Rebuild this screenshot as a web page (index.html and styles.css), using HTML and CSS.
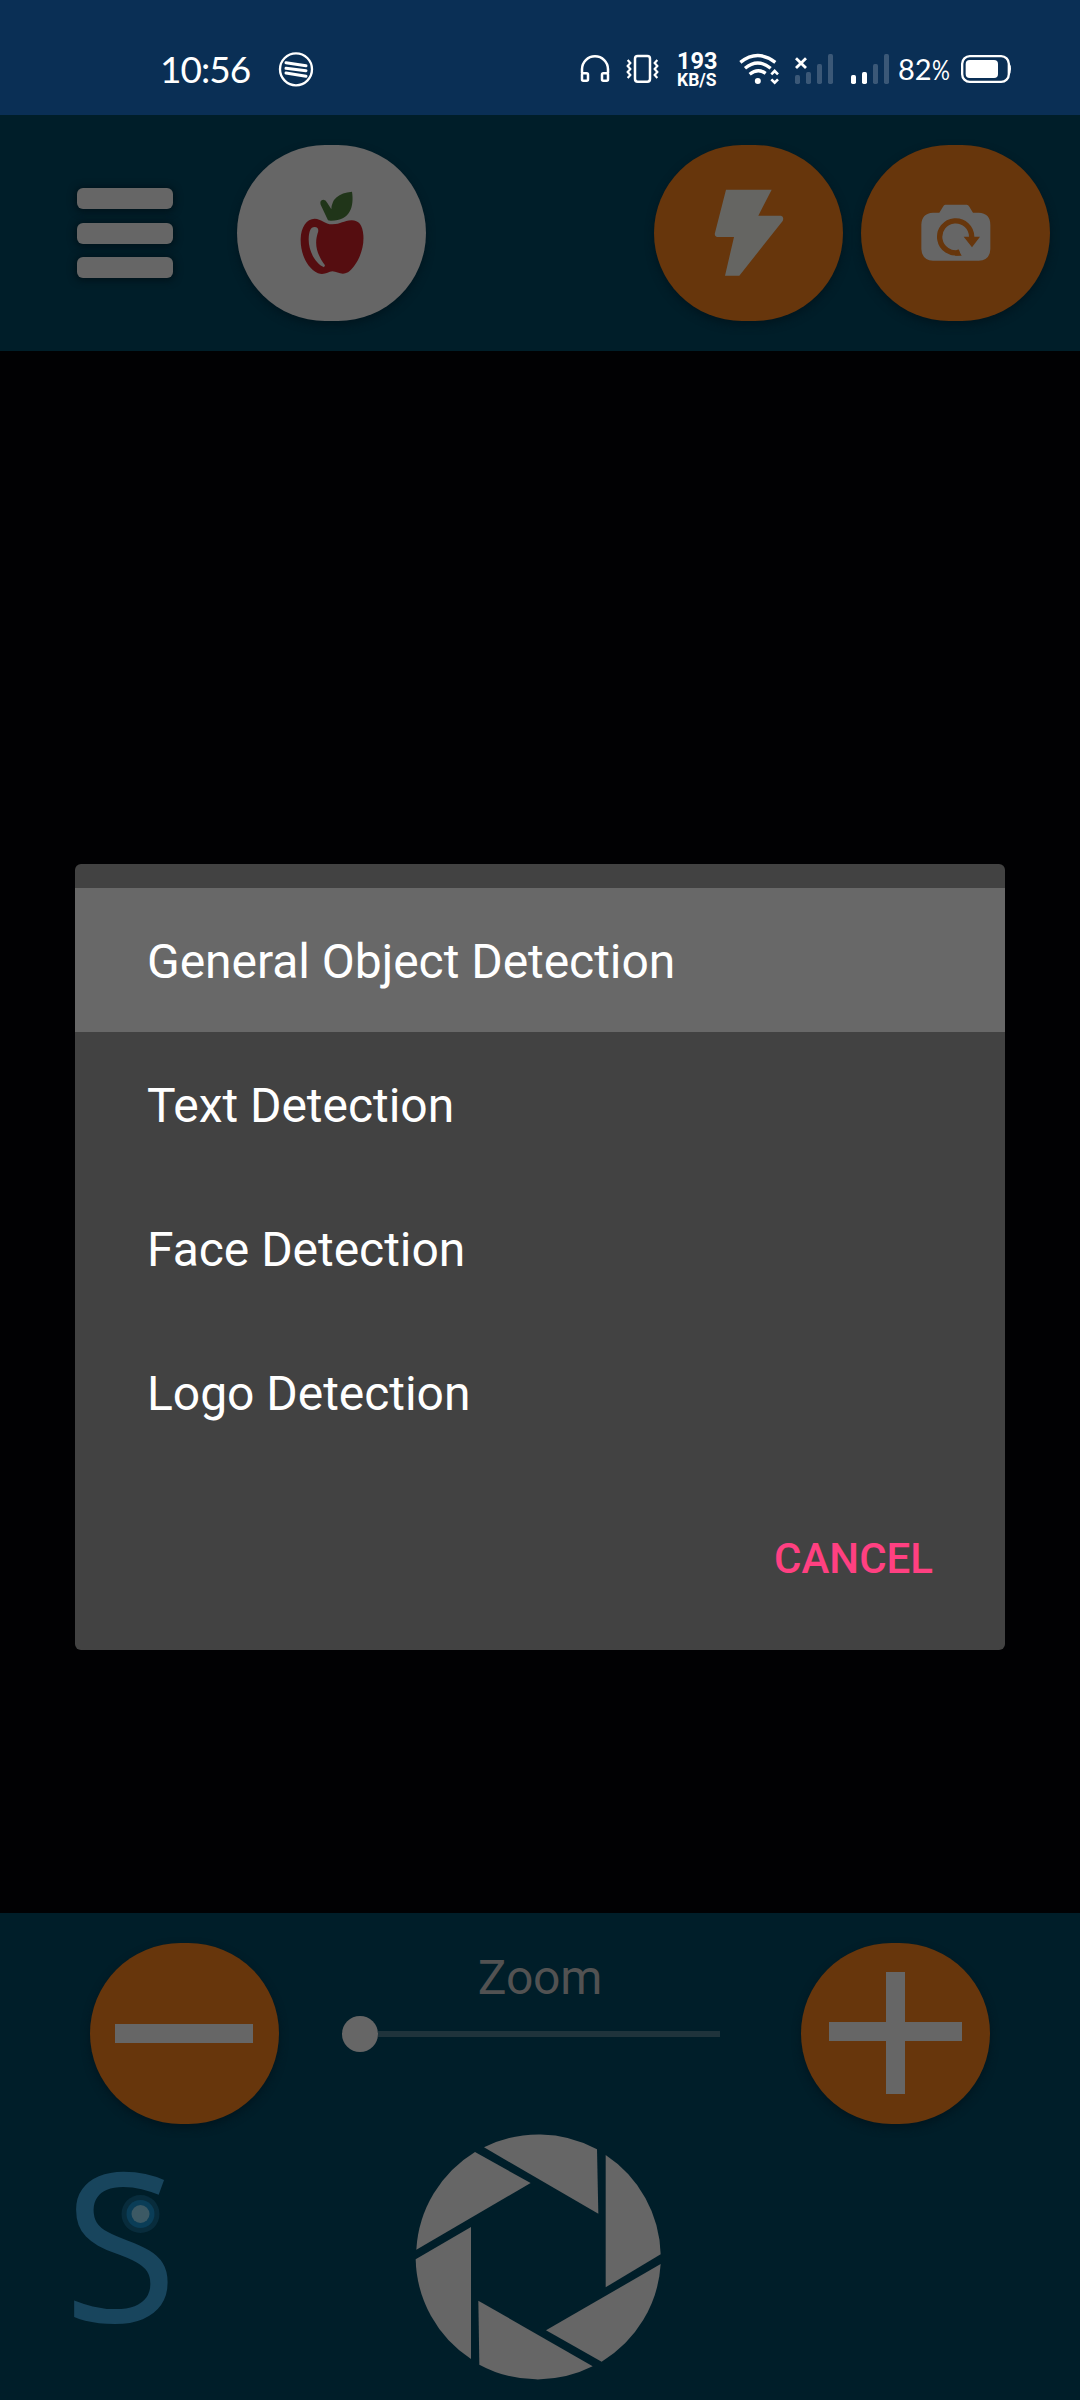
FILE: index.html
```html
<!DOCTYPE html>
<html lang="en">
<head>
<meta charset="utf-8">
<title>Camera</title>
<link rel="stylesheet" href="styles.css">
</head>
<body>
<div class="status">
  <span class="clock">10:56</span>
  <svg class="music" width="36" height="80" viewBox="414 0 108 240" fill="none" stroke="#fff"><circle cx="468" cy="118" r="48" stroke-width="7"/><path d="M438 98L498 107M438 115L498 122M438 129L498 139" stroke-width="9" stroke-linecap="round"/></svg>
  <svg class="phones" width="30" height="80" viewBox="60 0 90 240" fill="none" stroke="#fff" stroke-width="7.5"><path d="M66 130V118A39 39 0 0 1 144 118V130"/><rect x="66" y="130" width="18" height="22" rx="4"/><rect x="126" y="130" width="18" height="22" rx="4"/></svg>
  <svg class="vibrate" width="34" height="80" viewBox="198 0 102 240" fill="none" stroke="#fff" stroke-width="7.5"><rect x="225" y="78" width="45" height="77" rx="8"/><path d="M203 90L211 99L203 108L211 117L203 126L211 135L203 144M292 90L284 99L292 108L284 117L292 126L284 135L292 144" stroke-width="6.5"/></svg>
  <div class="speed"><span class="speed-value">193</span><span class="speed-unit">KB/S</span></div>
  <svg class="wifi" width="41" height="80" viewBox="537 0 123 240" fill="none" stroke="#fff" stroke-width="10"><path d="M541 97Q593 56 646 97M555 115Q593 83 632 115M569 133Q593 113 617 130"/><circle cx="593.500" cy="153" r="9" fill="#fff" stroke="none"/><path d="M634 133L644 123L654 133M634 148L644 158L654 148" stroke-width="8"/></svg>
  <svg class="sim-a" width="40" height="80" viewBox="42 0 120 240" fill="#3b5877"><rect x="45" y="135" width="15" height="27" rx="5"/><rect x="78" y="126" width="15" height="36" rx="5"/><rect x="111" y="102" width="15" height="60" rx="5"/><rect x="144" y="72" width="15" height="90" rx="5"/><path d="M48 85L78 114M78 85L48 114" stroke="#fff" stroke-width="8.500"/></svg>
  <svg class="sim-b" width="40" height="80" viewBox="210 0 120 240" fill="#3b5877"><rect x="213" y="135" width="15" height="27" rx="5" fill="#fff"/><rect x="246" y="126" width="15" height="36" rx="5" fill="#fff"/><rect x="279" y="102" width="15" height="60" rx="5"/><rect x="312" y="72" width="15" height="90" rx="5"/></svg>
  <span class="percent">82<small>%</small></span>
  <svg class="battery" width="52" height="80" viewBox="540 0 156 240"><rect x="546.500" y="78.500" width="140" height="77" rx="23" fill="none" stroke="#fff" stroke-width="7"/><rect x="557" y="90" width="97" height="54" rx="12" fill="#fff"/><path d="M688 99Q693 105 693 117Q693 129 688 135Z" fill="#fff"/></svg>
</div>

<header class="toolbar">
  <div class="menu"><i></i><i></i><i></i></div>
  <div class="round round-light">
    <svg width="64" height="84" viewBox="778 243 192 252"><path fill="#203519" d="M862 331L840 284Q836 270 848 269Q855 269 860 279L872 298Q873 251 934 245C941 290 928 333 870 332Z"/><path fill="#550d10" d="M822 326C842 326 851 343 875 343C901 343 908 332 933 331C954 331 966 345 968 375C972 425 945 470 922 487C903 497 891 485 875 484C862 485 853 496 832 490C797 472 779 430 780 386C781 352 798 326 822 326Z"/><path fill="#666" d="M822 351C833 351 835 360 831 370C820 405 830 435 853 466L850 472C823 460 803 422 804 386C805 365 809 351 822 351Z"/></svg>
  </div>
  <div class="round flash">
    <svg width="70" height="88" viewBox="251 238 210 264"><path fill="#656562" d="M287 240H424L384 318H452Q462 321 457 334L327 498H284L311 382H260Q251 380 254 369Z"/></svg>
  </div>
  <div class="round">
    <svg width="70" height="58" viewBox="872 283 210 174"><path fill="#666" d="M945 285H1009Q1014 285 1017 291L1028 309H1045Q1080 311 1080 345V418Q1079 452 1045 453H908Q875 452 873 418V345Q874 311 908 309H927L938 291Q941 285 945 285Z"/><path d="M1024 382A48 48 0 1 0 988 428" fill="none" stroke="#67360c" stroke-width="16"/><path fill="#67360c" d="M1000 381H1049L1025 413ZM983 418L994 438L974 438Z"/></svg>
  </div>
</header>

<main class="preview"></main>

<footer class="controls">
  <div class="zoom-row">
    <div class="round tall"><span class="minus"></span></div>
    <div class="zoom">
      <span class="zoom-label">Zoom</span>
      <div class="slider"><span class="thumb"></span><span class="track"></span></div>
    </div>
    <div class="round tall"><svg class="plus" width="133" height="122" viewBox="0 0 133 122"><path fill="#666" d="M57 0H76V50H133V69H76V122H57V69H0V50H57Z"/></svg></div>
  </div>
  <div class="shutter-row">
    <svg class="brand" width="160" height="300" viewBox="-20 -40 160 300"><text x="-0.500" y="188" class="brand-letter">S</text><circle cx="76.500" cy="80" r="19" fill="#082c3c"/><circle cx="76.500" cy="80" r="14" fill="#0a3d57"/><circle cx="76.500" cy="80" r="9" fill="#3c5964"/></svg>
    <svg class="shutter" width="246" height="246" viewBox="74 71 738 738" fill="#666"><path d="M281 111A368 368 0 0 1 620 117L624 310Z"/><path d="M646 134A368 368 0 0 1 811 432L646 531Z"/><path d="M811 461A368 368 0 0 1 634 754L467 660Z"/><path d="M607 768A368 368 0 0 1 267 763L264 571Z"/><path d="M242 746A368 368 0 0 1 76 447L242 350Z"/><path d="M78 418A368 368 0 0 1 254 125L421 218Z"/></svg>
  </div>
</footer>

<div class="dialog">
  <ul class="options">
    <li class="option selected">General Object Detection</li>
    <li class="option">Text Detection</li>
    <li class="option">Face Detection</li>
    <li class="option">Logo Detection</li>
  </ul>
  <div class="actions"><span class="cancel">CANCEL</span></div>
</div>
</body>
</html>
```

FILE: styles.css
```css
* { box-sizing: border-box; }
body {
  margin: 0;
  width: 1080px;
  height: 2400px;
  display: flex;
  flex-direction: column;
  position: relative;
  overflow: hidden;
  background: #010103;
  font-family: Roboto, "Liberation Sans", sans-serif;
}
svg { display: block; flex: none; }

.status {
  height: 115px;
  padding: 30px 0 0 160px;
  display: flex;
  background: #0a2f55;
  color: #fff;
}
.clock {
  width: 118px;
  font: 37px/78px Lato, sans-serif;
  letter-spacing: -1px;
}
.phones { margin-left: 266px; }
.vibrate { margin-left: 16px; }
.speed {
  width: 62px;
  margin-left: 17px;
  padding-top: 20px;
  display: flex;
  flex-direction: column;
  font-weight: 700;
}
.speed-value { font-size: 23.5px; line-height: 22px; }
.speed-unit { font-size: 17.5px; line-height: 17px; }
.sim-a { margin-left: 14px; }
.sim-b { margin-left: 16px; }
.percent {
  width: 62px;
  margin-left: 8px;
  font: 29px/78px Lato, sans-serif;
}
.percent small {
  display: inline-block;
  font-size: 26px;
  transform: scaleX(0.86);
  transform-origin: left;
}

.toolbar {
  height: 236px;
  padding: 30px 30px 0 77px;
  display: flex;
  background: #001e29;
}
.menu {
  width: 96px;
  margin: 43px 64px 0 0;
  display: flex;
  flex-direction: column;
  gap: 13.5px;
}
.menu i {
  height: 21px;
  border-radius: 6px;
  background: #666;
  box-shadow: 0 1px 7px 2px #00131b;
}
.round {
  width: 189px;
  height: 176px;
  flex: none;
  border-radius: 88px;
  display: flex;
  align-items: center;
  justify-content: center;
  background: #67360c;
  box-shadow: 0 4px 8px #00161f;
}
.round-light { background: #666; }
.flash { margin: 0 18px 0 228px; }
.tall { height: 181px; border-radius: 90.5px; }

.preview { height: 1562px; }

.controls { flex: 1; background: #001e29; }
.zoom-row {
  padding: 30px 90px 0;
  display: flex;
  justify-content: space-between;
}
.minus { width: 138px; height: 19px; margin-right: 1px; background: #666; }
.plus { margin-bottom: 2px; }
.zoom {
  width: 396px;
  padding-top: 7px;
  display: flex;
  flex-direction: column;
}
.zoom-label {
  font-size: 48px;
  line-height: 56px;
  letter-spacing: -0.2px;
  text-align: center;
  color: #525252;
}
.slider { margin-top: 10px; display: flex; align-items: center; }
.thumb { width: 36px; height: 36px; border-radius: 50%; background: #666; }
.track { width: 342px; height: 6px; background: #1f333b; }

.shutter-row { padding: 10px 0 0 44px; display: flex; align-items: flex-start; }
.brand { margin: -40px 211px 0 0; overflow: visible; }
.brand-letter {
  font: 208px "Open Sans", sans-serif;
  fill: #18455d;
}

.dialog {
  position: absolute;
  left: 75px;
  top: 864px;
  width: 930px;
  height: 786px;
  padding-top: 24px;
  border-radius: 6px;
  background: #424242;
}
.options { margin: 0; padding: 0; list-style: none; }
.option {
  height: 144px;
  padding-left: 72px;
  font-size: 48px;
  line-height: 148px;
  letter-spacing: -0.04px;
  color: #fff;
}
.selected { background: #686868; }
.actions {
  padding: 71px 72px 0 0;
  display: flex;
  justify-content: flex-end;
}
.cancel {
  font-size: 42px;
  line-height: 48px;
  font-weight: 500;
  color: #ff4081;
}
```
